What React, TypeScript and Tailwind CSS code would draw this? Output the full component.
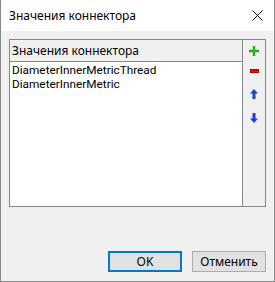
import React from 'react';

const font = { fontFamily: '"Noto Sans", "Liberation Sans", sans-serif' };
const listFont = { fontFamily: 'Roboto, "Noto Sans", sans-serif' };

const App: React.FC = () => {
  return (
    <div
      className="w-[275px] h-[282px] flex flex-col bg-[#f0f0f0] border border-t-0 border-[#8a8a8a] text-[12px] text-black overflow-hidden"
      style={font}
    >
      {/* title bar */}
      <div className="h-[31px] shrink-0 bg-white flex items-center justify-between pl-[8px] pr-[8px]">
        <span className="text-[12px] leading-none">Значения коннектора</span>
        <svg width="11" height="11" viewBox="0 0 11 11" className="mr-[3px]">
          <path d="M0.5 0.5 L10.5 10.5 M10.5 0.5 L0.5 10.5" stroke="#000" strokeWidth="1" />
        </svg>
      </div>

      <div className="flex-1 flex flex-col px-[8px] pt-[8px] pb-[8px]">
        {/* list + toolbar */}
        <div className="h-[168px] flex border border-[#828790]">
          <div className="flex-1 flex flex-col bg-white border-r border-[#828790]">
            <div className="h-[22px] bg-[#f0f0f0] border-b border-[#828790] flex items-center pl-[2px] text-[12px]">
              Значения коннектора
            </div>
            <div className="pt-[1px] pl-[2px] text-[11.8px] leading-[14px]" style={listFont}>
              <div>DiameterInnerMetricThread</div>
              <div>DiameterInnerMetric</div>
            </div>
          </div>
          <div className="w-[22px] flex flex-col items-center pt-[6px] gap-[13px]">
            <svg width="10" height="10" viewBox="0 0 10 10">
              <path d="M4 0h2v4h4v2H6v4H4V6H0V4h4z" fill="#22c322" />
              <path d="M4 0h2v4h4v2H6v4H4V6H0V4h4z" fill="none" stroke="#0f8a0f" strokeWidth="0.4" />
            </svg>
            <svg width="9" height="4" viewBox="0 0 9 4">
              <rect x="0" y="0" width="9" height="4" fill="#c80000" />
              <rect x="0.5" y="0.5" width="8" height="3" fill="#e01010" stroke="#9a0000" strokeWidth="0.6" />
            </svg>
            <svg width="8" height="10" viewBox="0 0 8 10" className="mt-[3px]">
              <path d="M4 0 L8 4.5 H5.5 V10 H2.5 V4.5 H0 Z" fill="#1f3fd0" />
            </svg>
            <svg width="8" height="10" viewBox="0 0 8 10" className="mt-[1px]">
              <path d="M4 10 L8 5.5 H5.5 V0 H2.5 V5.5 H0 Z" fill="#1f3fd0" />
            </svg>
          </div>
        </div>

        {/* buttons */}
        <div className="mt-auto flex justify-end gap-[10px] mb-[1px]">
          <button className="w-[74px] h-[21px] bg-[#e1e1e1] border-2 border-[#0078d7] text-[12px] leading-none">
            OK
          </button>
          <button className="w-[74px] h-[21px] bg-[#e1e1e1] border border-[#adadad] text-[12px] leading-none">
            Отменить
          </button>
        </div>
      </div>
    </div>
  );
};

export default App;
